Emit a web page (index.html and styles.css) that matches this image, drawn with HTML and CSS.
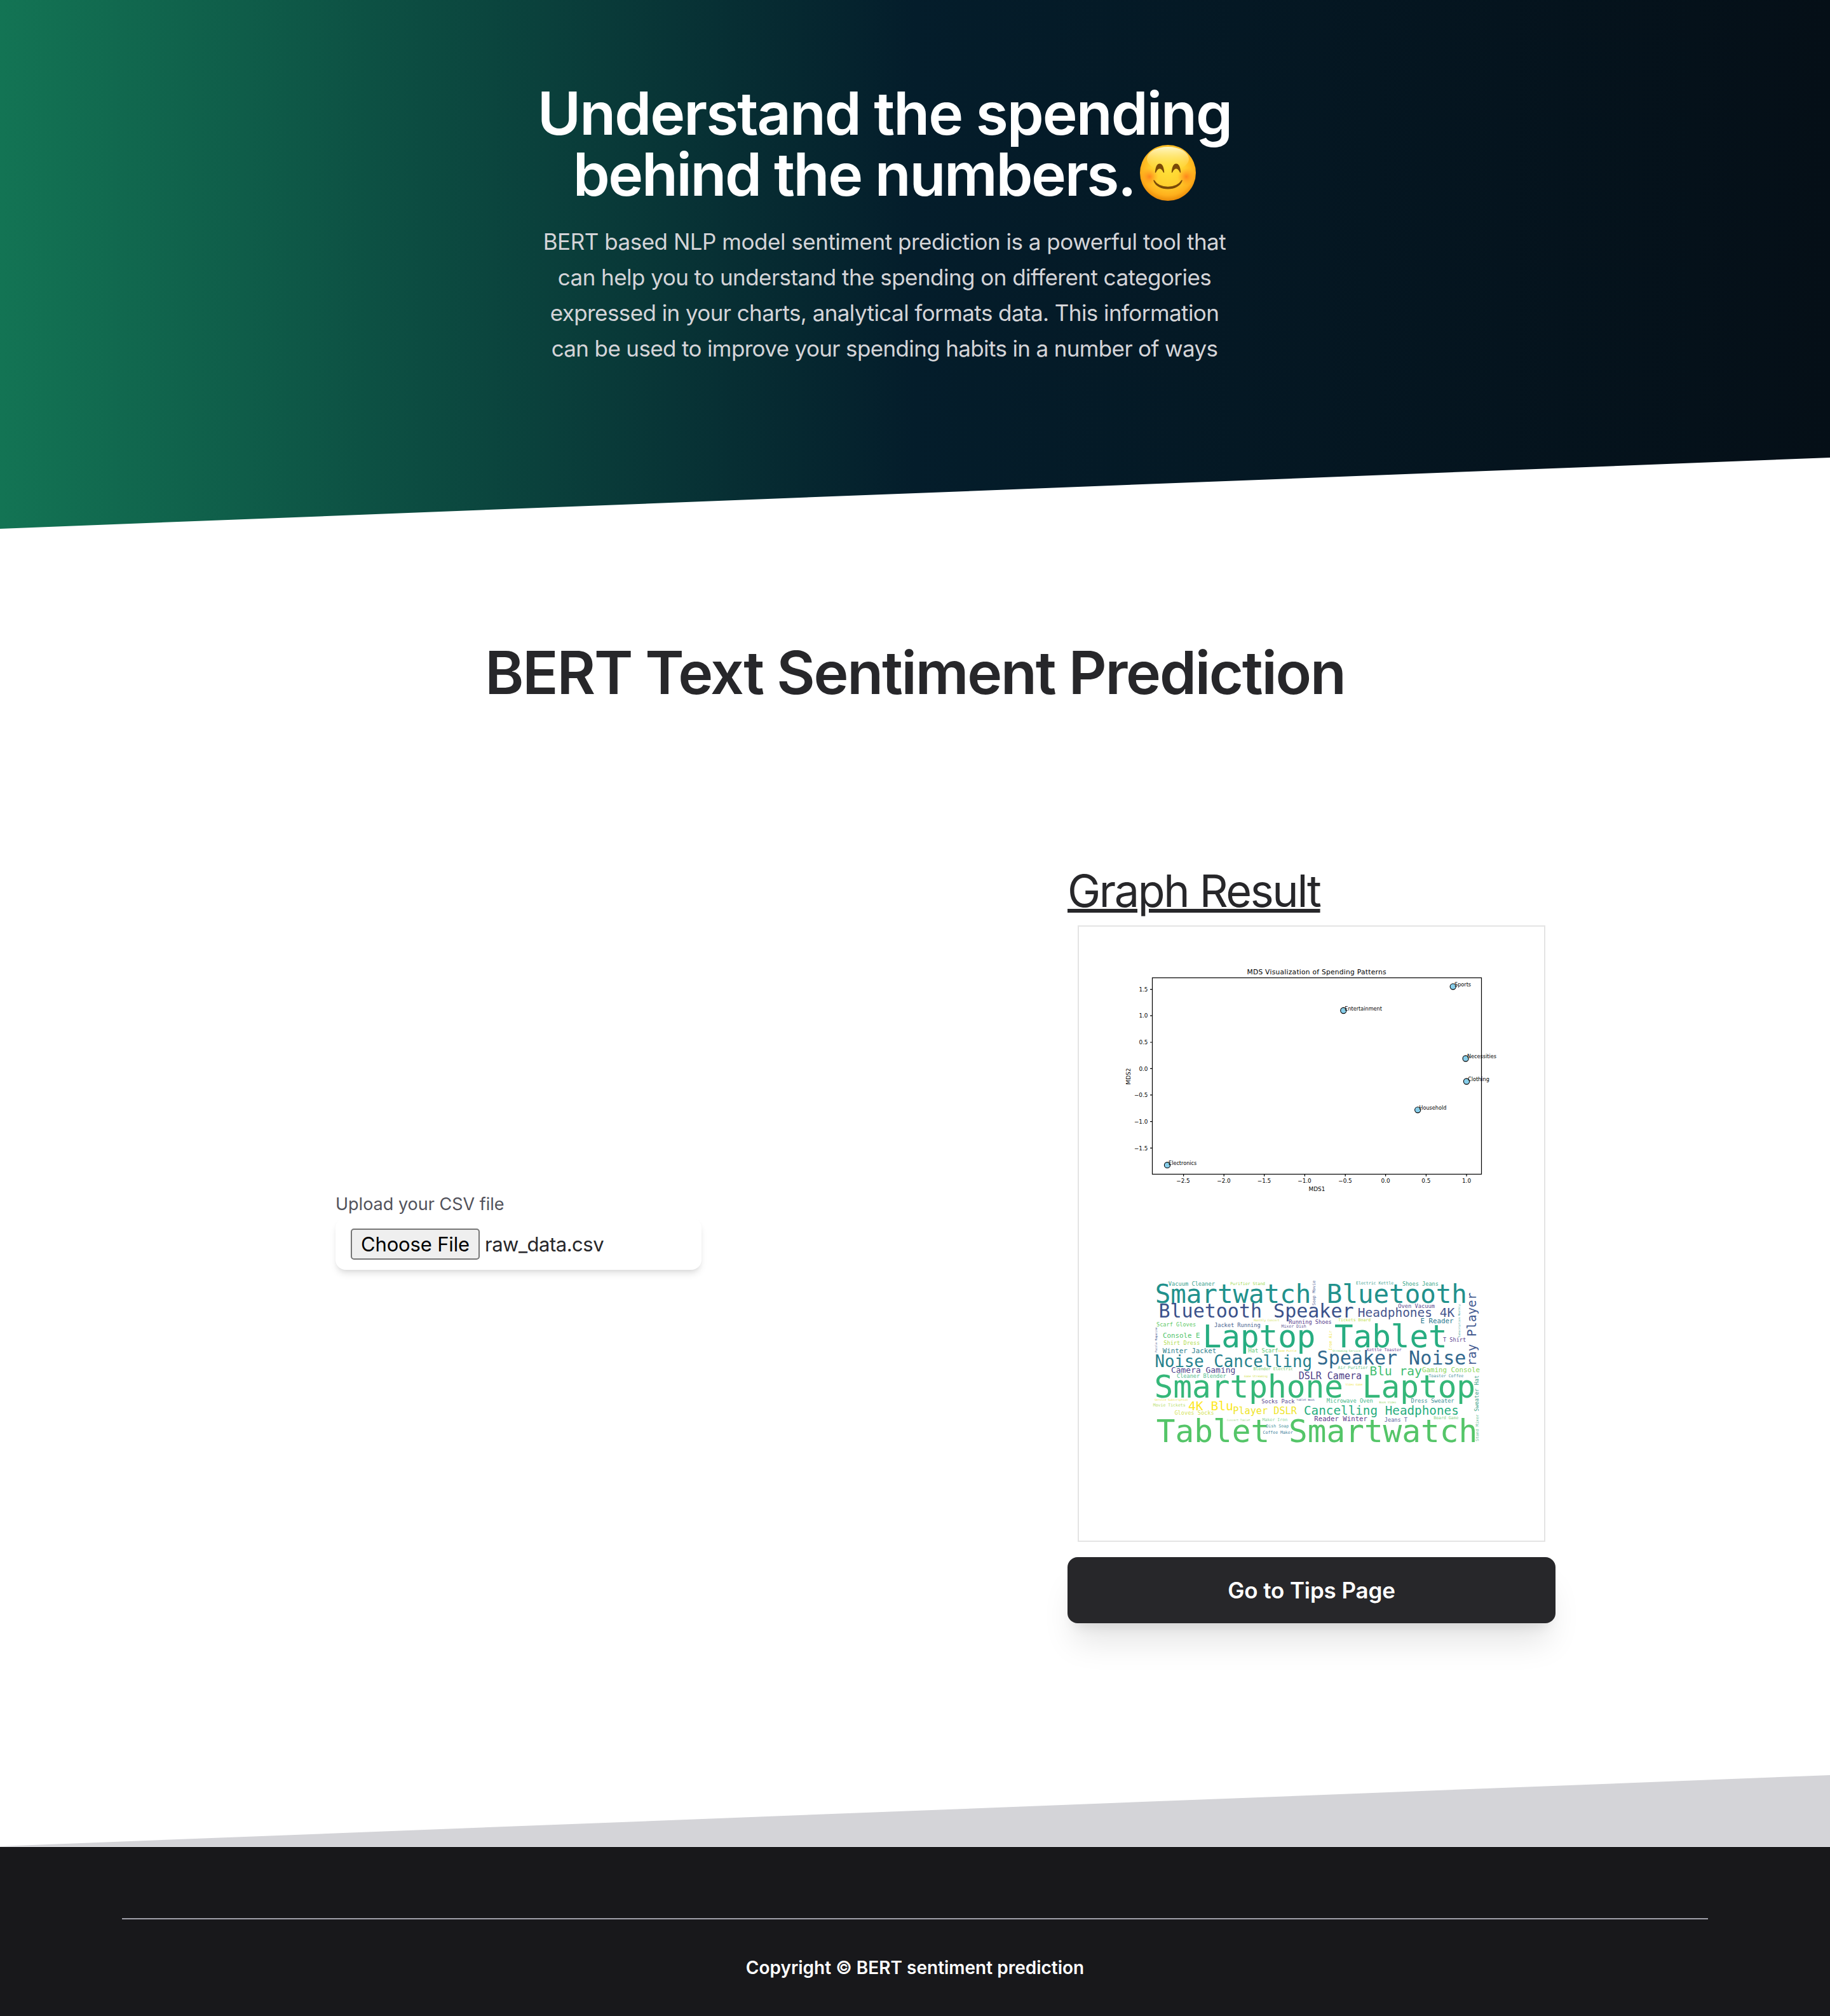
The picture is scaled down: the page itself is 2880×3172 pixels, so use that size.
FILE: index.html
```html
<!DOCTYPE html>
<html lang="en">
<head>
<meta charset="utf-8">
<title>BERT Text Sentiment Prediction</title>
<link rel="stylesheet" href="styles.css">
</head>
<body>
<header class="hero">
  <div class="hero-copy">
    <h1 class="hero-title">Understand the spending<br><span class="hero-line2">behind the numbers.</span><svg class="smile" viewBox="0 0 88 88" role="img" aria-label="Smiling face">
      <defs>
        <radialGradient id="face" cx="50%" cy="42%" r="60%"><stop offset="0" stop-color="#ffe23a"/><stop offset=".5" stop-color="#ffd02e"/><stop offset=".8" stop-color="#ffb01c"/><stop offset="1" stop-color="#e58305"/></radialGradient>
        <linearGradient id="shine" x1="0" y1="0" x2="0" y2="1"><stop offset="0" stop-color="#fffbd0" stop-opacity=".95"/><stop offset="1" stop-color="#ffe85a" stop-opacity="0"/></linearGradient>
        <radialGradient id="blush"><stop offset="0" stop-color="#ff7a1a" stop-opacity=".85"/><stop offset="1" stop-color="#ff9a1a" stop-opacity="0"/></radialGradient>
      </defs>
      <circle cx="44" cy="44" r="44" fill="url(#face)"/>
      <ellipse cx="44" cy="22" rx="33" ry="19" fill="url(#shine)"/>
      <circle cx="15" cy="50" r="14" fill="url(#blush)"/><circle cx="73" cy="50" r="14" fill="url(#blush)"/>
      <path d="M24.500 43C26 26 36 26 37.500 43C34 34.500 28 34.500 24.500 43Z" fill="#7a4a08" stroke="#7a4a08" stroke-width="1.500" stroke-linejoin="round"/>
      <path d="M50.500 43C52 26 62 26 63.500 43C60 34.500 54 34.500 50.500 43Z" fill="#7a4a08" stroke="#7a4a08" stroke-width="1.500" stroke-linejoin="round"/>
      <path d="M22 56C31 70 57 70 66 56C61 73 27 73 22 56Z" fill="#7a4a08" stroke="#7a4a08" stroke-width="1.500" stroke-linejoin="round"/>
    </svg></h1>
    <p class="hero-text"><span class="line-a">BERT based NLP model sentiment prediction is a powerful tool that</span><br><span class="line-b">can help you to understand the spending on different categories</span><br><span class="line-c">expressed in your charts, analytical formats data. This information</span><br><span class="line-d">can be used to improve your spending habits in a number of ways</span></p>
  </div>
</header>
<main class="content">
  <h2 class="title">BERT Text Sentiment Prediction</h2>
  <div class="columns">
    <section class="upload">
      <div class="upload-label">Upload your CSV file</div>
      <div class="upload-box"><button class="choose" type="button"><span>Choose File</span></button><span class="file-name">raw_data.csv</span></div>
    </section>
    <section class="result">
      <h3 class="result-title">Graph Result</h3>
      <div class="panel">
        <svg class="plot" viewBox="1698 1458 732 532">
          <g fill="none" stroke="#000" stroke-width="1.200">
            <rect x="1813.500" y="1538.500" width="518" height="309"/>
            <path d="M1810 1556.600h3.500M1810 1598.200h3.500M1810 1640h3.500M1810 1681.400h3.500M1810 1722.800h3.500M1810 1764.600h3.500M1810 1806.300h3.500M1862.600 1847.500v3.500M1926.200 1847.500v3.500M1989.700 1847.500v3.500M2053.400 1847.500v3.500M2117.200 1847.500v3.500M2180.600 1847.500v3.500M2244.400 1847.500v3.500M2308 1847.500v3.500"/>
          </g>
          <g fill="#87ceeb" stroke="#000" stroke-width="1.100">
            <circle cx="1837" cy="1833.200" r="4.600"/><circle cx="2114.300" cy="1590" r="4.600"/><circle cx="2286.700" cy="1552.300" r="4.600"/><circle cx="2306.600" cy="1665.500" r="4.600"/><circle cx="2308" cy="1701.500" r="4.600"/><circle cx="2231.200" cy="1746.300" r="4.600"/>
          </g>
          <g class="plot-text">
            <text class="plot-title" x="2072" y="1533" text-anchor="middle" textLength="219">MDS Visualization of Spending Patterns</text>
            <g text-anchor="end">
              <text x="1806.500" y="1559.800">1.5</text><text x="1806.500" y="1601.400">1.0</text><text x="1806.500" y="1643.200">0.5</text><text x="1806.500" y="1684.600">0.0</text><text x="1806.500" y="1726">−0.5</text><text x="1806.500" y="1767.800">−1.0</text><text x="1806.500" y="1809.500">−1.5</text>
            </g>
            <g text-anchor="middle">
              <text x="1862" y="1861">−2.5</text><text x="1926" y="1861">−2.0</text><text x="1989.500" y="1861">−1.5</text><text x="2053" y="1861">−1.0</text><text x="2117" y="1861">−0.5</text><text x="2180.600" y="1861">0.0</text><text x="2244.400" y="1861">0.5</text><text x="2308" y="1861">1.0</text>
              <text x="2072.500" y="1874">MDS1</text>
              <text transform="translate(1779.300 1693.500) rotate(-90)">MDS2</text>
            </g>
            <g class="plot-point">
              <text x="1839" y="1833">Electronics</text><text x="2116.300" y="1589.800">Entertainment</text><text x="2289" y="1552">Sports</text><text x="2309" y="1665.200">Necessities</text><text x="2310" y="1701.200">Clothing</text><text x="2233.300" y="1746">Household</text>
            </g>
          </g>
        </svg>
        <svg class="cloud" viewBox="0 0 580 310">
          <text x="37.700" y="60" font-size="40.800" fill="#21918c">Smartwatch Bluetooth</text>
          <text x="43.500" y="83.300" font-size="30" fill="#3b528b">Bluetooth Speaker</text>
          <text x="356.700" y="82.300" font-size="19.500" fill="#46558e">Headphones 4K</text>
          <text x="420.200" y="68.300" font-size="8.750" fill="#5b4a90">Oven Vacuum</text>
          <text x="58.800" y="33.300" font-size="8.700" fill="#35a08c">Vacuum Cleaner</text>
          <text x="156.200" y="32" font-size="6.500" fill="#a5db5a">Purifier Stand</text>
          <text x="354" y="31" font-size="6.560" fill="#3f9f93">Electric Kettle</text>
          <text x="427" y="33.300" font-size="8.600" fill="#3aa88a">Shoes Jeans</text>
          <text transform="translate(290.400 64) rotate(-90)" font-size="6.500" fill="#5a6a9c">Soap Movie</text>
          <text transform="translate(518 114) rotate(-90)" font-size="4.300" fill="#3aa095">Subscription Monthly</text>
          <text transform="translate(542.800 159.300) rotate(-90)" font-size="19.200" fill="#40588f">ray Player</text>
          <text x="455.600" y="91.700" font-size="10.800" fill="#2a788e">E Reader</text>
          <text x="40" y="96.700" font-size="8.600" fill="#5cc863">Scarf Gloves</text>
          <text x="131" y="98" font-size="8.630" fill="#46628f">Jacket Running</text>
          <text x="193.200" y="88.700" font-size="4.500" fill="#cfe14a">Monthly Concert</text>
          <text x="248.300" y="92.700" font-size="8.630" fill="#54398a">Running Shoes</text>
          <text x="236.500" y="99.300" font-size="6.500" fill="#5f5796">Mixer Dish</text>
          <text x="326" y="88.700" font-size="6.560" fill="#c4df50">Tickets Board</text>
          <text x="112.700" y="130" font-size="49.200" fill="#27ad81">Laptop Tablet</text>
          <text transform="translate(41.200 138) rotate(-90)" font-size="4.400" fill="#44578f">Puzzle Magazine</text>
          <text x="50" y="115" font-size="10.800" fill="#4fc46a">Console E</text>
          <text x="51.300" y="126.300" font-size="8.630" fill="#b0dd50">Shirt Dress</text>
          <text x="491" y="120.700" font-size="8.600" fill="#5b3f8e">T Shirt</text>
          <text transform="translate(315.600 135) rotate(-90)" font-size="6.500" fill="#f1e64a">Iron Air</text>
          <text x="49.700" y="139.300" font-size="10.800" fill="#2e7f8e">Winter Jacket</text>
          <text x="184.500" y="138" font-size="8.700" fill="#62ca72">Hat Scarf</text>
          <text x="231.400" y="136.700" font-size="4.400" fill="#ece64a">Game Puzzle</text>
          <text x="317" y="136.700" font-size="4.300" fill="#6fcf6a">Streaming Service</text>
          <text x="371" y="135.700" font-size="6.500" fill="#6a3d90">Kettle Toaster</text>
          <text x="292.600" y="157" font-size="30" fill="#31688e">Speaker Noise</text>
          <text x="37.500" y="161.300" font-size="25.700" fill="#26828e">Noise Cancelling</text>
          <text x="63" y="170.300" font-size="12.950" fill="#51458c">Camera Gaming</text>
          <text x="192.400" y="166" font-size="6.500" fill="#7fd070">Blender Electric</text>
          <text x="263.700" y="179.700" font-size="15" fill="#4f4088">DSLR Camera</text>
          <text x="325.600" y="163.700" font-size="6.500" fill="#6fc98a">Air Purifier</text>
          <text x="375.500" y="174" font-size="19.500" fill="#42be71">Blu ray</text>
          <text x="458" y="168.700" font-size="10.800" fill="#8bd658">Gaming Console</text>
          <text x="72" y="178" font-size="8.600" fill="#55bd90">Cleaner Blender</text>
          <text x="178" y="177" font-size="4.400" fill="#d3e34f">Game Streaming</text>
          <text x="468.400" y="176.700" font-size="6.500" fill="#4f97a0">Toaster Coffee</text>
          <text x="36.600" y="208.700" font-size="49.400" fill="#35b779">Smartphone Laptop</text>
          <text x="337.500" y="189.700" font-size="4.450" fill="#f0e64a">Video Game</text>
          <text transform="translate(547 230.700) rotate(-90)" font-size="8.600" fill="#3fa58c">Sweater Hat</text>
          <text transform="translate(547 277.700) rotate(-90)" font-size="6.400" fill="#6dbf9a">Stand Mixer</text>
          <text x="37" y="214.300" font-size="4.370" fill="#f0e64a">Service Subscription</text>
          <text x="34.800" y="223" font-size="6.500" fill="#b9de6a">Movie Tickets</text>
          <text x="90" y="229" font-size="19.600" fill="#fde725">4K Blu</text>
          <text x="160.300" y="235.300" font-size="15.200" fill="#f0e52a">Player DSLR</text>
          <text x="205.200" y="218" font-size="8.700" fill="#5a4a90">Socks Pack</text>
          <text x="260.300" y="214" font-size="4.300" fill="#4a4f90">Tablet Book</text>
          <text x="307.800" y="217.300" font-size="8.670" fill="#45b88a">Microwave Oven</text>
          <text x="390.500" y="218" font-size="4.450" fill="#a0d96a">Book Video</text>
          <text x="440.600" y="217.300" font-size="8.700" fill="#3d8f95">Dress Sweater</text>
          <text x="68.400" y="236.300" font-size="8.630" fill="#d5e35a">Gloves Socks</text>
          <text x="272" y="236" font-size="19.300" fill="#28ae80">Cancelling Headphones</text>
          <text x="288.300" y="245.700" font-size="10.700" fill="#5f3a8c">Reader Winter</text>
          <text x="398.800" y="246.700" font-size="8.600" fill="#5a5f9c">Jeans T</text>
          <text x="476.200" y="242.700" font-size="6.500" fill="#8ed48a">Board Game</text>
          <text x="39.800" y="278.700" font-size="49.400" fill="#54c568">Tablet Smartwatch</text>
          <text x="150.700" y="246.300" font-size="4.400" fill="#9fd98a">Concert Tablet</text>
          <text x="206.500" y="246.300" font-size="6.600" fill="#8ad39a">Maker Iron</text>
          <text x="212.400" y="255.700" font-size="6.600" fill="#4f97a0">Dish Soap</text>
          <text x="207.600" y="266" font-size="6.500" fill="#3f7f9c">Coffee Maker</text>
        </svg>
      </div>
      <button class="tips" type="button">Go to Tips Page</button>
    </section>
  </div>
  <div class="slope"></div>
</main>
<footer class="footer">
  <hr class="rule">
  <p class="copyright">Copyright © BERT sentiment prediction</p>
</footer>
</body>
</html>
```
FILE: styles.css
```css
* { box-sizing: border-box; margin: 0; padding: 0; }
body { font-family: Inter, "Liberation Sans", sans-serif; background: #fff; color: #27272a; width: 2880px; }
button { font-family: inherit; }

.hero { height: 832px; padding: 130px 0 0; background: linear-gradient(90deg, #137454 0%, #041d2b 50%, #050f17 100%); clip-path: polygon(0 0, 100% 0, 100% 720px, 0 832px); }
.hero-copy { width: 1200px; margin-left: 792px; text-align: center; white-space: nowrap; }
.hero-title { font-size: 93px; line-height: 96px; font-weight: 600; color: #fff; letter-spacing: -2px; }
.hero-line2 { letter-spacing: -2.350px; }
.smile { width: 88px; height: 88px; vertical-align: 0; margin: -20px 0 -8px 8px; }
.hero-text { margin-top: 30px; font-size: 35px; line-height: 56px; color: #d4d4d8; }
.line-a { letter-spacing: -.480px; }
.line-b { letter-spacing: -.540px; }
.line-c { letter-spacing: -.580px; }
.line-d { letter-spacing: -.640px; }

.content { height: 2073px; display: flex; flex-direction: column; }
.title { margin-top: 178px; font-size: 93px; line-height: 96px; font-weight: 600; text-align: center; white-space: nowrap; letter-spacing: -2.200px; }
.columns { margin-top: 256px; display: grid; grid-template-columns: 576px 768px; column-gap: 576px; padding-left: 528px; }

.upload { align-self: start; margin-top: 512px; }
.upload-label { padding-top: 1px; font-size: 27px; line-height: 40px; color: #52525b; }
.upload-box { margin-top: 1px; height: 82px; display: flex; align-items: center; padding: 0 24px; gap: 8px; border-radius: 16px; background: #fff; box-shadow: 0 8px 12px -2px rgba(0,0,0,.1), 0 4px 8px -4px rgba(0,0,0,.1); }
.choose { width: 203px; height: 49px; border: 2px solid #767676; border-radius: 5px; background: #efefef; font-size: 31px; letter-spacing: -.150px; color: #000; white-space: nowrap; }
.file-name { font-size: 31px; line-height: 49px; letter-spacing: -.500px; }

.result-title { font-size: 70px; line-height: 80px; font-weight: 400; letter-spacing: -2.360px; text-decoration: underline; text-decoration-thickness: 6px; text-underline-offset: 3px; white-space: nowrap; }
.panel { margin: 14px 16px 0; height: 970px; border: 2px solid #e4e4e4; display: flex; flex-direction: column; }
.plot { width: 732px; height: 532px; flex: none; }
.plot-text { font-family: "DejaVu Sans", sans-serif; font-size: 8.900px; fill: #000; }
.plot-title { font-size: 10.700px; }
.plot-point { font-size: 8.150px; }
.cloud { width: 580px; height: 310px; margin-left: 82px; flex: none; font-family: "DejaVu Sans Mono", monospace; }
.tips { display: block; width: 768px; height: 104px; margin-top: 24px; border: 0; border-radius: 16px; background: #27272a; color: #fff; font-size: 35px; font-weight: 600; letter-spacing: -.130px; box-shadow: 0 40px 50px -10px rgba(0,0,0,.1), 0 16px 20px -12px rgba(0,0,0,.1); }

.slope { height: 112px; margin-top: auto; background: #d4d4d8; clip-path: polygon(100% 0, 100% 100%, 0 100%); }
.footer { height: 267px; border-top: 1px solid #ebebee; background: #18181b; padding: 112px 192px 0; }
.rule { border: 0; height: 2px; background: #a1a1aa; }
.copyright { margin-top: 56px; font-size: 28px; line-height: 40px; font-weight: 600; color: #fff; text-align: center; }
```
